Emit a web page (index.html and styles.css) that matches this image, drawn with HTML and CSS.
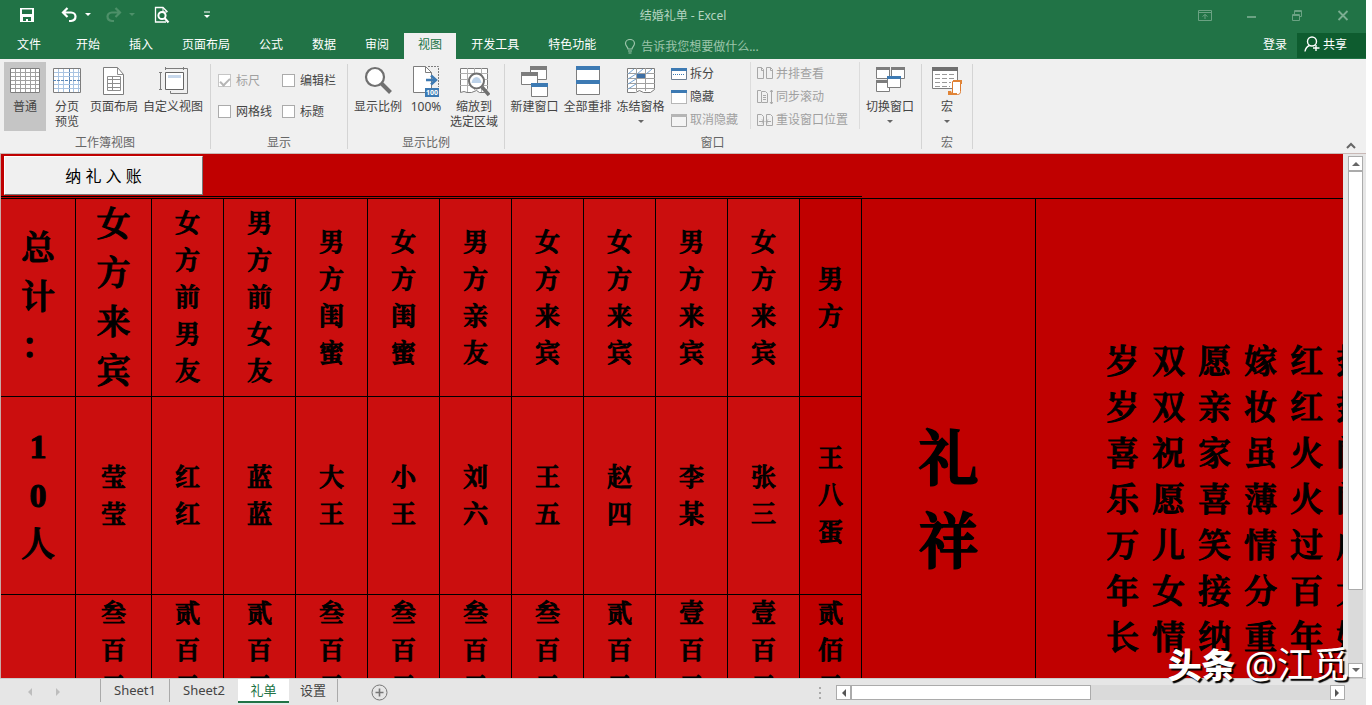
FILE: index.html
```
<!DOCTYPE html>
<html lang="zh-CN">
<head>
<meta charset="utf-8">
<title>结婚礼单 - Excel</title>
<link rel="stylesheet" href="styles.css">
</head>
<body>
<div class="app">
  <header class="titlebar">
    <div class="quick">
      <button class="q-save" aria-label="保存"><svg width="16" height="16" viewBox="0 0 16 16"><path d="M1 1h14v14H1z" fill="#fff"/><path d="M4 2.500h9v4.500H3V2.500zM4 10h8v4H9v-2H7v2H4z" fill="#217346"/></svg></button>
      <button class="q-undo" aria-label="撤消"><svg width="34" height="18" viewBox="0 0 34 18"><path d="M6.500 2L2 6.500 6.500 11M2.500 6.500H10c6 0 6 8 0 8.500H8" fill="none" stroke="#fff" stroke-width="2.200"/><path d="M24 7h6l-3 3z" fill="#fff"/></svg></button>
      <button class="q-redo" aria-label="恢复"><svg width="34" height="18" viewBox="0 0 34 18"><path d="M10.500 2L15 6.500 10.500 11M14.500 6.500H7c-6 0-6 8 0 8.500h2" fill="none" stroke="#4d9069" stroke-width="2.200"/><path d="M24 7h6l-3 3z" fill="#4d9069"/></svg></button>
      <button class="q-preview" aria-label="打印预览"><svg width="16" height="18" viewBox="0 0 16 18"><path d="M12 16H1.500V1.500H9L13.500 6" fill="none" stroke="#fff" stroke-width="1.300"/><path d="M9 2v4h4" fill="none" stroke="#fff"/><circle cx="8" cy="9.500" r="3.600" fill="none" stroke="#fff" stroke-width="2"/><path d="M10.500 12l4 4.500" stroke="#fff" stroke-width="2.200"/></svg></button>
      <button class="q-more" aria-label="自定义快速访问工具栏"><svg width="8" height="8" viewBox="0 0 8 8"><path d="M1 1h6" stroke="#fff"/><path d="M1 4h6L4 7z" fill="#fff"/></svg></button>
    </div>
    <h1 class="doc">结婚礼单 - Excel</h1>
    <div class="winbtns">
      <button aria-label="功能区显示选项"><svg width="14" height="11" viewBox="0 0 14 11"><path d="M.5.500h13v10H.5zM.5 2.500h13M7 9V4.500M4.500 6.500L7 4.500l2.500 2" fill="none" stroke="#6ba283"/></svg></button>
      <button aria-label="最小化"><svg width="14" height="11" viewBox="0 0 14 11"><path d="M3 7h9" stroke="#6ba283" stroke-width="2"/></svg></button>
      <button aria-label="还原"><svg width="14" height="11" viewBox="0 0 14 11"><path d="M2.500 4.500h7v6h-7zM2.500 5.500h7M4.500 4V.500h7v6H10M4.500 1.500h7" fill="none" stroke="#6ba283"/></svg></button>
      <button aria-label="关闭"><svg width="14" height="11" viewBox="0 0 14 11"><path d="M2.500 1l9 9M11.500 1l-9 9" stroke="#7bad91" stroke-width="1.800"/></svg></button>
    </div>
  </header>
  <nav class="tabs">
    <button class="tab file">文件</button><button class="tab">开始</button><button class="tab">插入</button><button class="tab">页面布局</button><button class="tab">公式</button><button class="tab">数据</button><button class="tab">审阅</button><button class="tab active">视图</button><button class="tab">开发工具</button><button class="tab">特色功能</button>
    <label class="tell"><svg width="12" height="15" viewBox="0 0 12 15"><path d="M4 10c0-2-2.500-3-2.500-5.500a4.500 4 0 0 1 9 0C10.500 7 8 8 8 10zM4 12h4M4.500 14h3" fill="none" stroke="#9cc5ab" stroke-width="1.200"/></svg><input type="text" placeholder="告诉我您想要做什么..." aria-label="告诉我您想要做什么"></label>
    <button class="login">登录</button>
    <button class="share"><svg width="16" height="16" viewBox="0 0 16 16"><circle cx="8" cy="5.500" r="4.500" fill="none" stroke="#fff" stroke-width="1.400"/><path d="M1 15.500c.5-3 2-5 4.500-6M12 9v6M9 12h6.500" fill="none" stroke="#fff" stroke-width="1.400"/></svg>共享</button>
  </nav>
  <section class="ribbon">
    <div class="group g-views">
      <div class="tools">
        <button class="big on"><svg width="32" height="32" viewBox="0 0 32 32"><path d="M1 3h30v25H1z" fill="#fff"/><path d="M1.500 7.500h29M1.500 11.500h29M1.500 15.500h29M1.500 19.500h29M1.500 23.500h29M6.500 3v25M11.500 3v25M16.500 3v25M21.500 3v25M26.500 3v25" fill="none" stroke="#a0a0a0"/><path d="M1.500 3.500h29v24h-29z" fill="none" stroke="#7d7d7d"/></svg><span>普通</span></button>
        <button class="big"><svg width="32" height="32" viewBox="0 0 32 32"><path d="M2 3h28v25H2z" fill="#fff"/><path d="M7.500 3v25M12.500 3v25M22.500 3v25M27.500 3v25M2 7.500h28M2 11.500h28M2 19.500h28M2 23.500h28" stroke="#a9c4e2"/><path d="M2.500 3.500h27v24h-27z" fill="none" stroke="#7d7d7d"/><path d="M18.500 4v24M2 15.500h28" stroke="#5c88b8" stroke-dasharray="3 1"/></svg><span>分页<br>预览</span></button>
        <button class="big w52"><svg width="32" height="32" viewBox="0 0 32 32"><path d="M5.500 2.500h14l6 7v20h-20z" fill="#fff" stroke="#7d7d7d"/><path d="M19.500 2.500v7h6M9.500 11.500h13v14h-13zM9.500 14.500h13M9.500 18.500h13M9.500 22.500h13M14.500 11v15" fill="none" stroke="#8d8d8d"/></svg><span>页面布局</span></button>
        <button class="big w64"><svg width="32" height="32" viewBox="0 0 32 32"><path d="M8.500 7.500h18v17h-18z" fill="#fff" stroke="#666"/><path d="M11 10h13v3H11z" fill="#c6d7eb"/><path d="M3.500 7v18M2 7.500h3M2 24.500h3M8 3.500h19M8.500 2v3M26.500 2v3M27 3.500h3.500v25h-17V26" fill="none" stroke="#7d7d7d"/></svg><span>自定义视图</span></button>
      </div>
      <div class="glabel">工作簿视图</div>
    </div>
    <div class="group g-show">
      <div class="checks">
        <label class="off"><input type="checkbox" checked disabled>标尺</label><label><input type="checkbox">编辑栏</label>
        <label><input type="checkbox">网格线</label><label><input type="checkbox">标题</label>
      </div>
      <div class="glabel">显示</div>
    </div>
    <div class="group g-zoom">
      <div class="tools">
        <button class="big w54"><svg width="32" height="32" viewBox="0 0 32 32"><circle cx="13" cy="12" r="9" fill="#fff" stroke="#707070" stroke-width="2.200"/><path d="M19.500 18.500l9 9" stroke="#707070" stroke-width="4"/></svg><span>显示比例</span></button>
        <button class="big"><svg width="32" height="32" viewBox="0 0 32 32"><path d="M3.500 1.500h12l6 6v20h-18z" fill="#fff" stroke="#7d7d7d"/><path d="M15.500 1.500v6h6" fill="none" stroke="#7d7d7d"/><path d="M18 1.500h10.500V22" fill="none" stroke="#7d7d7d" stroke-dasharray="2 1"/><path d="M16 15h9M21 10.500l5 4.500-5 4.500" fill="none" stroke="#3d7ab3" stroke-width="2.500"/><path d="M15 23h14v9H15z" fill="#3d7ab3"/><text x="16" y="30" class="tiny">100</text></svg><span>100%</span></button>
        <button class="big w54"><svg width="32" height="32" viewBox="0 0 32 32"><path d="M2.500 3.500h27v20l-3 4h-5l-3-2-5 2H9l-3-1-3.500 1z" fill="#fff" stroke="#7d7d7d"/><path d="M2 8.500h28M2 14.500h28M2 20.500h28M9.500 3v24M16.500 3v22M23.500 3v24" stroke="#b0b0b0"/><circle cx="18.500" cy="16" r="7.500" fill="#fff" stroke="#707070" stroke-width="2"/><path d="M13.500 18c1-8 9-8 10 0z" fill="#bdd2e9"/><path d="M24 22l7 8" stroke="#707070" stroke-width="3.500"/></svg><span>缩放到<br>选定区域</span></button>
      </div>
      <div class="glabel">显示比例</div>
    </div>
    <div class="group g-window">
      <div class="tools">
        <button class="big w53"><svg width="32" height="32" viewBox="0 0 32 32"><path d="M11.500 2.500h16v12h-16z" fill="#fff" stroke="#7d7d7d"/><path d="M11 1h17v4H11z" fill="#7d7d7d"/><path d="M2.500 8.500h16v11h-16z" fill="#fff" stroke="#7d7d7d"/><path d="M2 7h17v4H2z" fill="#7d7d7d"/><path d="M12.500 19.500h16v12h-16z" fill="#fff" stroke="#7d7d7d"/><path d="M12 18h17v4H12z" fill="#3d7ab3"/></svg><span>新建窗口</span></button>
        <button class="big w53"><svg width="32" height="32" viewBox="0 0 32 32"><path d="M4.500 1.500h23v28h-23z" fill="#fff" stroke="#7d7d7d"/><path d="M4 1h24v4H4zM4 15h24v4H4z" fill="#3d7ab3"/></svg><span>全部重排</span></button>
        <button class="big w53"><svg width="32" height="32" viewBox="0 0 32 32"><path d="M2.500 3.500h27v21l-4 3h-7l-4-2-4 2h-8z" fill="#fff" stroke="#7d7d7d"/><path d="M2 8.500h28M2 13.500h28M2 18.500h28M2 23.500h28M11.500 3v23M20.500 3v23" stroke="#a0a0a0"/><path d="M3 9l6-5M12 9l6-5M21 9l6-5M3 14l8-5M3 19l8-5M3 24l8-5" stroke="#78a5d2"/><path d="M12 9h8v4h-8z" fill="#3d6fa5"/></svg><span>冻结窗格</span><i class="caret"></i></button>
      </div>
      <div class="stack s1">
        <button><svg width="16" height="16" viewBox="0 0 16 16"><path d="M.5 2.500h15v11H.5z" fill="#fff" stroke="#6d7f94"/><path d="M0 2h16v3H0z" fill="#3d7ab3"/><path d="M2 8.500h12" stroke="#3d7ab3" stroke-dasharray="1 1"/></svg>拆分</button>
        <button><svg width="16" height="16" viewBox="0 0 16 16"><path d="M.5 2.500h15v12H.5z" fill="#fff" stroke="#777" stroke-dasharray="1 1"/><path d="M0 1h16v3H0z" fill="#3d7ab3"/></svg>隐藏</button>
        <button disabled><svg width="16" height="16" viewBox="0 0 16 16"><path d="M.5 2.500h15v12H.5z" fill="#f4f4f4" stroke="#a5a5a5"/><path d="M0 2h16v3H0z" fill="#b5b5b5"/></svg>取消隐藏</button>
      </div>
      <div class="stack s2">
        <button disabled><svg width="16" height="16" viewBox="0 0 16 16"><path d="M.5 1.500h4l2 2v9h-6zM9.500 1.500h4l2 2v9h-6zM4.500 1.500v3h2M13.500 1.500v3h2" fill="none" stroke="#a8a8a8"/></svg>并排查看</button>
        <button disabled><svg width="16" height="16" viewBox="0 0 16 16"><path d="M4 1.500H.5v12H4M4.500 2.500h4l2 2v9h-6zM6 6.500h3M6 8.500h3M6 10.500h3M14.500 1v14M13 3l1.500-2L16 3M13 13l1.500 2 1.500-2" fill="none" stroke="#a8a8a8"/></svg>同步滚动</button>
        <button disabled><svg width="16" height="16" viewBox="0 0 16 16"><path d="M.5 2.500h4l2 2v9h-6zM9.500 2.500h4l2 2v9h-6zM2 9.500h5M5 7.500l2 2-2 2M14 9.500H9M11 7.500l-2 2 2 2" fill="none" stroke="#a8a8a8"/></svg>重设窗口位置</button>
      </div>
      <div class="tools switch">
        <button class="big w54"><svg width="32" height="32" viewBox="0 0 32 32"><path d="M2.500 3.500h13v10h-13zM17.500 3.500h13v10h-13zM2.500 16.500h13v10h-13z" fill="#fff" stroke="#7d7d7d"/><path d="M2 2h14v3H2zM17 2h14v3H17zM2 15h14v3H2z" fill="#7d7d7d"/><path d="M13.500 12.500h13v10h-13z" fill="#fff" stroke="#7d7d7d"/><path d="M13 11h14v3H13z" fill="#3d7ab3"/></svg><span>切换窗口</span><i class="caret"></i></button>
      </div>
      <div class="glabel">窗口</div>
    </div>
    <div class="group g-macro">
      <div class="tools">
        <button class="big"><svg width="32" height="32" viewBox="0 0 32 32"><path d="M1.500 2.500h25v21h-25z" fill="#fff" stroke="#7d7d7d"/><path d="M1 2h26v4H1z" fill="#707070"/><path d="M4 9.500h20M4 13.500h20M4 17.500h16M4 21.500h15" stroke="#999" stroke-dasharray="5 2"/><path d="M21.500 16.500h8v10c0 2-1 3-3 3h-5z" fill="#fff" stroke="#dd7a2e"/><path d="M20 26h-3v4h9v-2h-5zM22 15h9v4h-2v-2h-7z" fill="#e08437"/></svg><span>宏</span><i class="caret"></i></button>
      </div>
      <div class="glabel">宏</div>
    </div>
    <button class="collapse" aria-label="折叠功能区"><svg width="10" height="8" viewBox="0 0 10 8"><path d="M1 6l4-4 4 4" fill="none" stroke="#666" stroke-width="2"/></svg></button>
  </section>
  <main class="work">
    <div class="sheet">
      <table>
        <colgroup><col class="c-total"><col class="c-big"><col class="c-n"><col class="c-n"><col class="c-n"><col class="c-n"><col class="c-n"><col class="c-n"><col class="c-n"><col class="c-n"><col class="c-n"><col class="c-last"><col class="c-title"><col></colgroup>
        <tr class="r-top"><td class="dbl" colspan="12"><button class="entry">纳 礼 入 账</button></td><td colspan="2"></td></tr>
        <tr class="r-cell">
          <td><div class="v large">总<br>计<br>：</div></td><td><div class="v large">女方来宾</div></td><td><div class="v">女方前男友</div></td><td><div class="v">男方前女友</div></td><td><div class="v">男方闺蜜</div></td><td><div class="v">女方闺蜜</div></td><td><div class="v">男方亲友</div></td><td><div class="v">女方来宾</div></td><td><div class="v">女方来宾</div></td><td><div class="v">男方来宾</div></td><td><div class="v">女方来宾</div></td><td class="dark"><div class="v">男方</div></td>
          <td class="dark title" rowspan="3"><div class="v huge">礼祥</div></td>
          <td class="dark verse" rowspan="3"><div class="poem"><div class="v">岁岁喜乐万年长</div><div class="v">双双祝愿儿女情</div><div class="v">愿亲家喜笑接纳</div><div class="v">嫁妆虽薄情分重</div><div class="v">红红火火过百年</div><div class="v">热热闹闹成大婚</div></div></td>
        </tr>
        <tr class="r-cell">
          <td><div class="v large">1<br>0<br>人</div></td><td><div class="v">莹莹</div></td><td><div class="v">红红</div></td><td><div class="v">蓝蓝</div></td><td><div class="v">大王</div></td><td><div class="v">小王</div></td><td><div class="v">刘六</div></td><td><div class="v">王五</div></td><td><div class="v">赵四</div></td><td><div class="v">李某</div></td><td><div class="v">张三</div></td><td class="dark"><div class="v">王八蛋</div></td>
        </tr>
        <tr class="r-cell r-sum">
          <td></td><td><div class="v">叁百元</div></td><td><div class="v">贰百元</div></td><td><div class="v">贰百元</div></td><td><div class="v">叁百元</div></td><td><div class="v">叁百元</div></td><td><div class="v">叁百元</div></td><td><div class="v">叁百元</div></td><td><div class="v">贰百元</div></td><td><div class="v">壹百元</div></td><td><div class="v">壹百元</div></td><td class="dark"><div class="v">贰佰元</div></td>
        </tr>
      </table>
    </div>
    <div class="vscroll">
      <button aria-label="向上滚动"><svg width="8" height="5" viewBox="0 0 8 5"><path d="M0 5l4-4 4 4z" fill="#666"/></svg></button>
      <div class="vthumb"></div><div class="vrest"></div>
      <button aria-label="向下滚动"><svg width="8" height="5" viewBox="0 0 8 5"><path d="M0 0l4 4 4-4z" fill="#666"/></svg></button>
    </div>
  </main>
  <footer class="bottom">
    <div class="navs">
      <button aria-label="上一个"><svg width="6" height="8" viewBox="0 0 6 8"><path d="M5 0L1 4l4 4z" fill="#bdbdbd"/></svg></button>
      <button aria-label="下一个"><svg width="6" height="8" viewBox="0 0 6 8"><path d="M1 0l4 4-4 4z" fill="#bdbdbd"/></svg></button>
    </div>
    <button class="st sep">Sheet1</button><button class="st sep">Sheet2</button><button class="st current">礼单</button><button class="st last">设置</button>
    <button class="add" aria-label="新工作表"><svg width="17" height="17" viewBox="0 0 17 17"><circle cx="8.500" cy="8.500" r="7.500" fill="none" stroke="#777"/><path d="M8.500 4.500v8M4.500 8.500h8" stroke="#777" stroke-width="1.600"/></svg></button>
    <svg class="dots" width="3" height="12" viewBox="0 0 3 12"><path d="M1 0h2v2H1zM1 5h2v2H1zM1 10h2v2H1z" fill="#aaa"/></svg>
    <div class="hscroll">
      <button aria-label="向左滚动"><svg width="5" height="8" viewBox="0 0 5 8"><path d="M5 0L1 4l4 4z" fill="#555"/></svg></button>
      <div class="hthumb"></div><div class="hrest"></div>
      <button aria-label="向右滚动"><svg width="5" height="8" viewBox="0 0 5 8"><path d="M0 0l4 4-4 4z" fill="#555"/></svg></button>
    </div>
  </footer>
  <div class="mark"><b>头条</b><span>@江觅</span></div>
</div>
</body>
</html>
```
FILE: styles.css
```
* { box-sizing: border-box; }
body { margin: 0; padding-right: 6px; background: #fff; font: 12px/15px "Noto Sans", "Noto Sans CJK SC", sans-serif; color: #444; }
button { margin: 0; padding: 0; border: 0; background: none; font: inherit; color: inherit; }
svg { display: block; flex: none; }
.app { position: relative; height: 100vh; display: flex; flex-direction: column; overflow: hidden; background: #f0f0f0; }

.titlebar { display: grid; grid-template-columns: 1fr auto 1fr; align-items: center; height: 30px; background: #217346; }
.quick { display: flex; align-items: center; padding-left: 19px; }
.q-undo { margin-left: 26px; }
.q-redo { margin-left: 10px; }
.q-preview { margin-left: 15px; }
.q-more { margin-left: 33px; }
.doc { margin: 0; font-size: 12px; font-weight: 400; color: #b5d5c1; }
.winbtns { display: flex; justify-content: flex-end; gap: 32px; padding-right: 16px; }

.tabs { display: flex; align-items: stretch; gap: 1px; height: 29px; padding-top: 3px; background: #217346; color: #fff; }
.tab { padding: 0 14px 3px; white-space: nowrap; }
.tab.file { padding: 0 20px 3px 17px; }
.tab.active { background: #f0f0f0; color: #217346; }
.tell { display: flex; align-items: center; gap: 5px; margin-left: 13px; flex: 1; }
.tell input { flex: 1; min-width: 0; padding: 0; border: 0; outline: 0; background: none; font: inherit; color: #fff; }
.tell input::placeholder { color: #9cc5ab; opacity: 1; }
.login { padding: 0 9px 3px; }
.share { display: flex; align-items: center; gap: 3px; padding: 0 19px 3px 7px; margin-bottom: 1px; background: #0e5c2f; }

.ribbon { display: flex; position: relative; height: 95px; padding-top: 3px; border-bottom: 1px solid #c9b9b6; background: #f0f0f0; }
.group { display: grid; grid-template-rows: 73px 15px; grid-auto-columns: max-content; position: relative; padding-right: 5px; }
.group::after { content: ""; position: absolute; right: 0; top: 2px; bottom: 4px; width: 1px; background: #d4d4d4; }
.g-views { padding-left: 4px; width: 211px; }
.g-show { width: 137px; padding-left: 7px; }
.g-zoom { width: 157px; padding-left: 3px; }
.g-window { width: 417px; padding-left: 3px; grid-template-columns: auto auto auto auto; justify-content: start; }
.g-macro { width: 51px; padding-left: 4px; }
.glabel { grid-column: 1 / -1; text-align: center; color: #666; }
.tools { display: flex; align-items: flex-start; }
.big { display: flex; flex-direction: column; align-items: center; width: 42px; height: 69px; padding-top: 3px; white-space: nowrap; }
.big span { margin-top: 2px; }
.big.on { background: #c5c5c5; }
.w52 { width: 52px; }
.w53 { width: 53px; }
.w54 { width: 54px; }
.w64 { width: 66px; }
.tiny { font: bold 7px "Noto Sans", sans-serif; fill: #fff; }
.caret { margin-top: 6px; border: 3px solid transparent; border-top-color: #666; border-bottom: 0; }
.checks { display: grid; grid-template-columns: 64px 58px; grid-template-rows: 31px 31px; padding-top: 3px; }
.checks label { display: flex; align-items: center; gap: 5px; white-space: nowrap; }
.checks input { appearance: none; flex: none; width: 13px; height: 13px; margin: 0; border: 1px solid #ababab; background: #fff; }
.checks input:checked { display: grid; place-items: center; border-color: #c6c6c6; }
.checks input:checked::before { content: ""; width: 4px; height: 8px; border: solid #b5b5b5; border-width: 0 2px 2px 0; transform: rotate(45deg); }
.checks .off { color: #a0a0a0; }
.stack { display: grid; grid-template-rows: repeat(3, 23px); margin-left: 4px; }
.stack button { display: flex; align-items: center; gap: 3px; white-space: nowrap; text-align: left; }
.stack button:disabled { color: #a0a0a0; }
.s1 { width: 80px; height: 67px; border-right: 1px solid #dcdcdc; }
.s2 { width: 103px; height: 67px; margin-left: 6px; border-right: 1px solid #dcdcdc; }
.switch { margin-left: 3px; }
.collapse { margin: auto 10px 3px auto; }

.work { flex: 1; min-height: 0; display: flex; background: #e6e6e6; }
.sheet { flex: 1; min-width: 0; overflow: hidden; border-left: 1px solid #c9a9a6; background: #c00000; }
table { width: 100%; table-layout: fixed; border-collapse: separate; border-spacing: 0; color: #000; }
td { padding: 0; border: solid #000; border-width: 0 1px 1px 0; background: #cb0e0e; overflow: hidden; }
.c-total { width: 75px; }
.c-big { width: 76px; }
.c-n { width: 72px; }
.c-last { width: 62px; }
.c-title { width: 174px; }
.r-top { height: 45px; }
.r-top td { border-right: 0; background: #c00000; vertical-align: top; }
.r-top .dbl { border-bottom: 3px double #000; }
.r-cell { height: 198px; }
.r-cell .dark { background: #c00000; }
.r-cell .verse { border-right: 0; }
.entry { display: block; width: 199px; height: 39px; margin: 2px 0 0 3px; border: 1px solid #fff; border-right-color: #777; border-bottom-color: #777; background: #f0f0f0; font-size: 16px; line-height: 24px; color: #000; }
.v { width: 1em; margin: 0 auto; font: 600 25px/37px "Liberation Serif", "Noto Serif CJK SC", "Noto Sans CJK SC", serif; -webkit-text-stroke: 1px #000; text-align: center; line-break: anywhere; }
.large { font-size: 34px; line-height: 49px; }
.huge { font-size: 60px; line-height: 83px; -webkit-text-stroke-width: 2px; }
.title { padding-top: 12px; }
.r-sum td { vertical-align: top; }
.poem { display: flex; gap: 13px; padding: 9px 0 0 70px; }
.poem .v { flex: none; margin: 0; font-size: 33px; line-height: 46px; }

.vscroll { display: flex; flex-direction: column; width: 23px; padding: 2px 3px 0 5px; }
.vscroll button { display: grid; place-items: center; height: 15px; border: 1px solid #ababab; background: #fff; }
.vthumb { flex: 420; border: 1px solid #ababab; background: #fff; }
.vrest { flex: 74; background: #dadada; }

.bottom { display: flex; align-items: flex-start; height: 27px; background: #e6e6e6; border-top: 1px solid #ccc; }
.navs { display: flex; gap: 22px; padding: 9px 39px 0 27px; }
.st { height: 23px; font-size: 13px; line-height: 23px; white-space: nowrap; }
.st.sep { width: 69px; border-left: 1px solid #aaa; }
.st.current { width: 51px; height: 24px; background: #fff; color: #217346; border-bottom: 2px solid #217346; }
.st.last { width: 49px; border-right: 1px solid #aaa; }
.add { margin: 5px 0 0 33px; }
.dots { margin: 8px 15px 0 auto; }
.hscroll { display: flex; width: 38%; max-width: 509px; height: 15px; margin: 6px 21px 0 0; background: #dadada; }
.hscroll button { display: grid; place-items: center; width: 15px; border: 1px solid #ababab; background: #fff; }
.hthumb { flex: 239; border: 1px solid #ababab; background: #fff; }
.hrest { flex: 240; }

.mark { position: absolute; right: 17px; bottom: 15px; display: flex; align-items: center; gap: 9px; color: #fff; font-size: 36px; line-height: 50px; text-shadow: 2px 2px 1px #000; }
.mark b { font-size: 34px; font-weight: 900; }
```
